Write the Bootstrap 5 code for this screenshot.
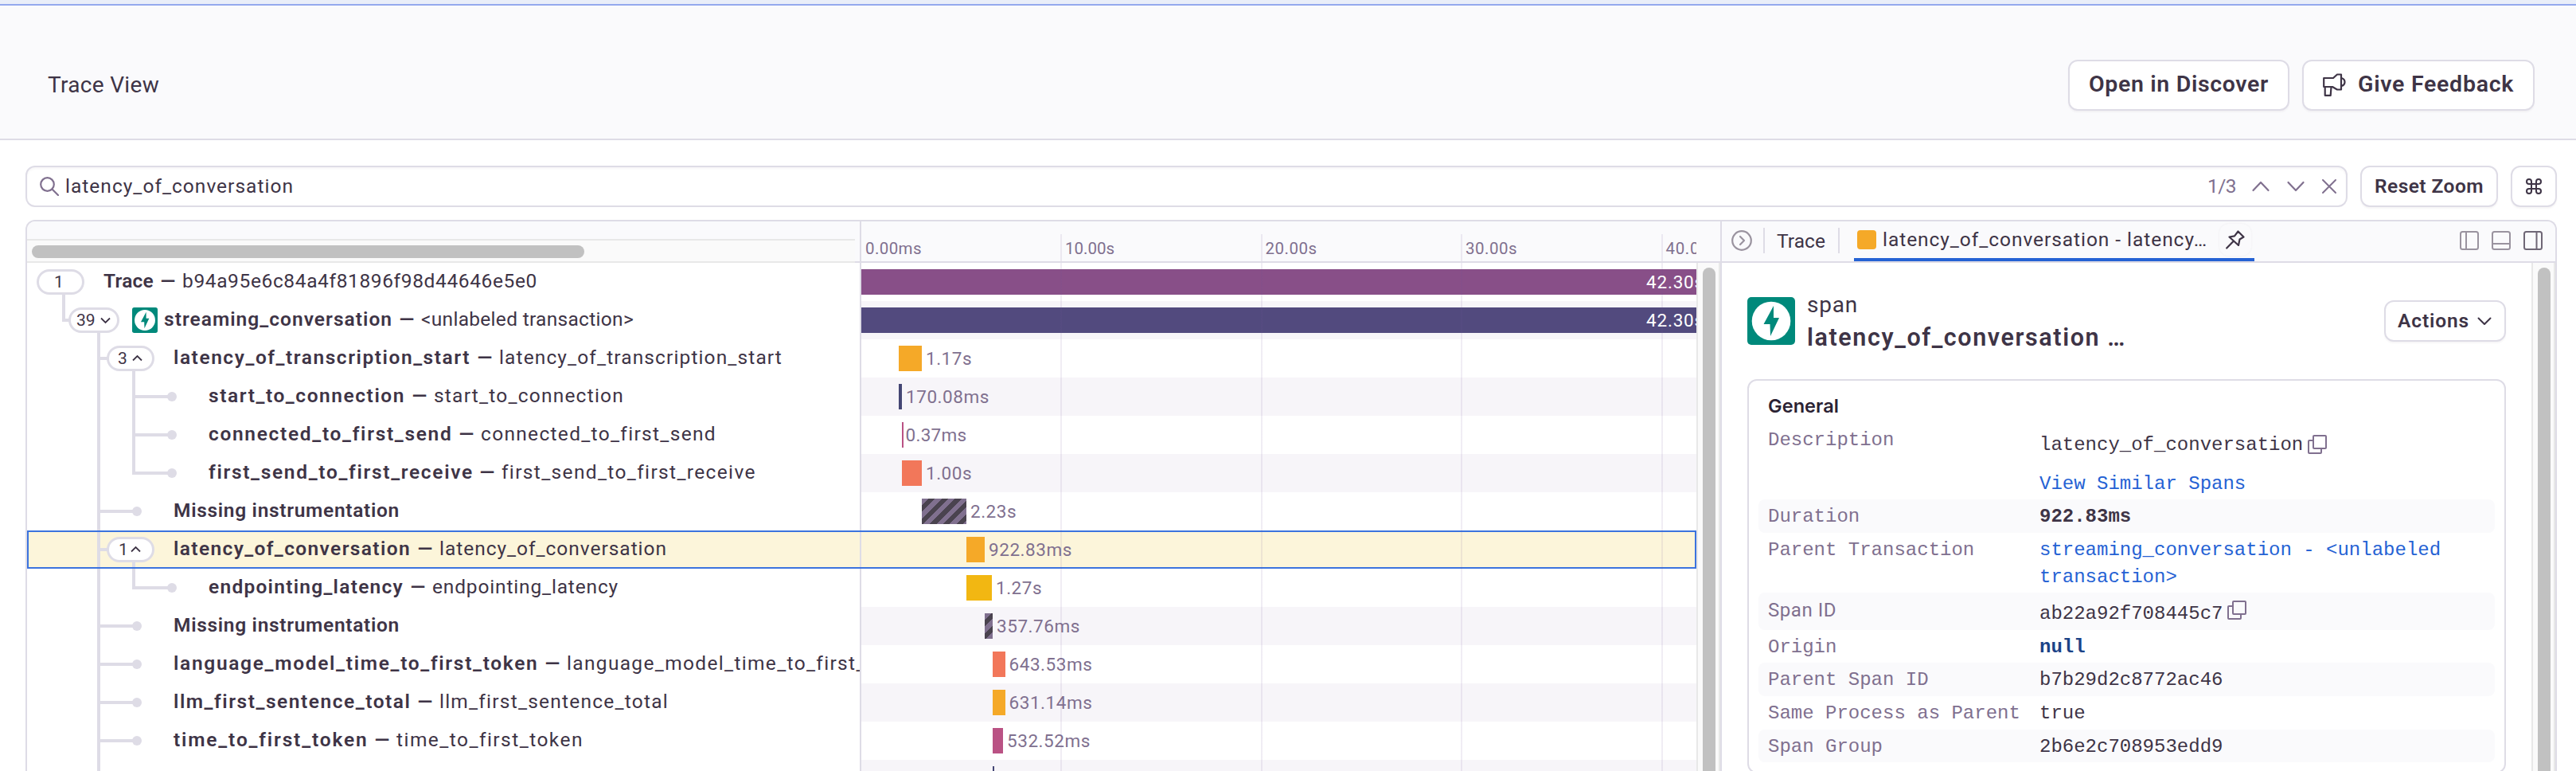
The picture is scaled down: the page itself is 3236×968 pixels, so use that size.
<!DOCTYPE html>
<html lang="en">
<head>
<meta charset="utf-8">
<title>Trace View</title>
<link href="https://cdn.jsdelivr.net/npm/bootstrap@5.3.0/dist/css/bootstrap.min.css" rel="stylesheet">
<style>
:root{--line:#dedce6;--ink:#3e3446;--sub:#80708f;--soft:#fafafc;--blue:#2562d4}
body{font-family:Roboto,"Liberation Sans",sans-serif;font-size:24.5px;line-height:1.2;color:var(--ink);height:968px;overflow:hidden;background:#fff}
svg{display:block;flex:none}
b{font-weight:600}
.bar-top{height:7px;background:#e9eef9;border-bottom:2px solid #94a9ee}
.page-head{height:169px;background:var(--soft);border-bottom:2px solid var(--line);padding:32px 52px 0 60px;font-size:28px}
.btn-line{background:#fff;border:2px solid var(--line);border-radius:12px;color:var(--ink);font-weight:600;padding:0;display:flex;align-items:center;box-shadow:0 2px 2px rgba(43,34,51,.04);line-height:1}
.btn-lg2{height:64px;font-size:28.5px;padding:0 24px}
.find{height:52px;border:2px solid var(--line);border-radius:12px;width:2917px;padding:0 12px 0 16px;box-shadow:inset 0 2px 3px rgba(43,34,51,.04)}
.find svg{color:var(--sub)}
.btn-sm2{height:52px;font-size:24.5px;justify-content:center}
.viewer{margin:16px 24px 0 32px;height:720px;border:2px solid var(--line);border-radius:12px 12px 0 0;border-bottom:0;overflow:hidden}
.main-col{width:2127px}
.strip{height:52px;border-bottom:2px solid var(--line);background:var(--soft)}
.tree-head{width:1046px;border-right:0}
.hscroll{width:1040px;margin-top:22px;height:30px;border-top:2px solid #e8e8e8;border-bottom:2px solid #e8e8e8;background:#fafafa;padding:6px 6px 0}
.thumb-h{width:694px;height:16px;border-radius:8px;background:#c1c1c1}
.axis{width:1051px;border-left:2px solid var(--line);padding-top:16px;overflow:hidden;font-size:20.5px;color:var(--sub)}
.tick{flex:none;width:251.5px;height:34px;border-left:2px solid rgba(110,80,150,.1);padding:6px 0 0 4px}
.tick:first-child{border-color:transparent;padding-left:3px;width:250px}
.body-rows{height:640px}
.rows{width:2097px;overflow:hidden;position:relative}
.trace-row{height:48px;display:flex;position:relative}
.tree-cell{width:1046px;flex:none;overflow:hidden;display:flex;align-items:center;white-space:nowrap}
.tree-cell b,.tree-cell span{position:relative;top:-1px}
.time-cell{flex:1 1 0;border-left:2px solid var(--line);display:flex;align-items:center;overflow:hidden;white-space:nowrap;font-size:22.5px;color:var(--sub)}
.trace-row:nth-child(even) .time-cell{background:#f7f5f9}
.trace-row.picked .tree-cell,.trace-row.picked .time-cell{background:#fcf5da}
.trace-row.picked::after{content:"";position:absolute;inset:0;border:2px solid #3b73de}
.span-bar{height:32px;flex:none;margin-right:5px}
.full{width:1060px;margin:0;color:#fff;padding:3px 0 0 986px}
.c-pur{background:#884f88}.c-ind{background:#524a7e}.c-org{background:#f5a928}.c-navy{background:#444674}.c-pink{background:#ba5284}.c-cor{background:#f2775a}.c-yel{background:#f2b712}
.c-gap{background:repeating-linear-gradient(135deg,#80708f 0 6px,#4a434f 6px 11.8px)}
.gridlines{position:absolute;inset:0 0 0 1297.5px;background:repeating-linear-gradient(90deg,rgba(110,80,150,.1) 0 2px,transparent 2px 251.5px);pointer-events:none}
.dash{width:36px;text-align:center;font-weight:600;flex:none}
.fit{display:inline-block;white-space:nowrap;flex:none}
.pill{fill:#fff;stroke:var(--line);stroke-width:3}
.num{font-size:21px;fill:var(--ink)}
.vscroll{width:30px;background:#fafafa;border:solid #e8e8e8;border-width:0 2px;padding:6px 0 0 6px}
.thumb-v{width:16px;height:700px;border-radius:8px;background:#c1c1c1}
.side{flex:1;border-left:2px solid var(--line);display:flex;flex-direction:column}
.sep{width:2px;height:32px;background:var(--line);margin-top:8px}
.tab-on{height:50px;border-bottom:4px solid var(--blue);width:503px;padding:0 4px;margin-left:18px}
.swatch{width:24px;height:24px;border-radius:4px}
.pinbox{width:40px;height:40px;border-radius:12px;box-shadow:0 0 3px rgba(43,34,51,.06);margin:0 0 0 15px}
.detail{width:953px;margin:43px 32px 0;height:60px}
.info{width:953px;margin:43px 32px 0;height:495px;border:2px solid var(--line);border-radius:12px;padding:14px 12px 0;background:#fff}
.info h6{font-family:Inter,Roboto,sans-serif;font-weight:600;font-size:23.5px;line-height:36px;margin:0 0 0 12px;color:#2b2233}
.kv{display:flex;padding:5px 12px 3px;border-radius:8px;font-family:"Liberation Mono",monospace;font-size:24px;line-height:34px;height:41.7px;white-space:nowrap}
.kv:nth-child(even){background:var(--soft)}
.kv dt{width:341px;flex:none;font-weight:400;color:var(--sub)}
.kv dd{margin:0}
.kv a{color:var(--blue);text-decoration:none}
</style>
</head>
<body>
<svg width="0" height="0" class="position-absolute">
  <defs>
    <symbol id="bolt" viewBox="0 0 60 60"><rect width="60" height="60" rx="5" fill="#00897b"/><circle cx="30" cy="30" r="24.3" fill="#fff"/><path d="M33 11 20.5 34h8L29 49 40 26h-7z" fill="#00897b"/></symbol>
    <symbol id="copy" viewBox="0 0 24 24"><g fill="none" stroke="#80708f" stroke-width="2" stroke-linejoin="round"><rect x="7" y="1" width="16" height="16" rx="1"/><path d="M7 7H2q-1 0-1 1v14q0 1 1 1h14q1 0 1-1v-5"/></g></symbol>
    <symbol id="leaf1" viewBox="0 0 184 48"><path d="M90 0v48M92 24h46" stroke="#dedce6" stroke-width="4"/><circle cx="138" cy="24" r="6" fill="#dedce6"/></symbol>
    <symbol id="leaf2" viewBox="0 0 228 48"><path d="M90 0v48M134 0v48M136 24h46" stroke="#dedce6" stroke-width="4"/><circle cx="182" cy="24" r="6" fill="#dedce6"/></symbol>
    <symbol id="leaf2end" viewBox="0 0 228 48"><path d="M90 0v48M134 0v24M132 24h50" fill="none" stroke="#dedce6" stroke-width="4"/><circle cx="182" cy="24" r="6" fill="#dedce6"/></symbol>
  </defs>
</svg>

<div class="bar-top"></div>
<header class="page-head d-flex align-items-center justify-content-between">
  <span class="fit" data-w="140">Trace View</span>
  <div class="d-flex" style="gap:16px">
    <button class="btn btn-line btn-lg2"><span class="fit" data-w="226">Open in Discover</span></button>
    <button class="btn btn-line btn-lg2"><svg width="29" height="29" viewBox="0 0 29 29" fill="none" stroke="currentColor" stroke-width="2.2" stroke-linejoin="round"><path d="M1.2 6H13l5-4.5h5v19h-5L12 17H1.2zM2.7 17v10.8h7L10.500 17M23.500 6q4 1.200 4 5t-4 5"/></svg><span class="fit" data-w="196" style="margin-left:15px">Give Feedback</span></button>
  </div>
</header>

<div class="d-flex" style="padding:32px 24px 0 32px;gap:16px">
  <div class="find d-flex align-items-center">
    <svg width="24" height="24" viewBox="0 0 24 24" fill="none" stroke="currentColor" stroke-width="2.2" stroke-linecap="round"><circle cx="9.500" cy="9.500" r="8.300"/><path d="M15.500 15.500 23 23"/></svg>
    <span class="fit" data-w="287" style="margin-left:8px">latency_of_conversation</span>
    <span class="fit ms-auto" data-w="36" style="color:var(--sub)">1/3</span>
    <svg style="margin-left:18px" width="26" height="24" viewBox="0 0 26 24" fill="none" stroke="currentColor" stroke-width="2.2" stroke-linecap="round" stroke-linejoin="round"><path d="m3.500 17 9.500-10 9.500 10"/></svg>
    <svg style="margin-left:18px" width="26" height="24" viewBox="0 0 26 24" fill="none" stroke="currentColor" stroke-width="2.200" stroke-linecap="round" stroke-linejoin="round"><path d="m3.500 7 9.500 10 9.500-10"/></svg>
    <svg style="margin-left:19px;margin-right:-1px" width="20" height="24" viewBox="0 0 20 24" fill="none" stroke="currentColor" stroke-width="2" stroke-linecap="round"><path d="m2 4 16 16M18 4 2 20"/></svg>
  </div>
  <button class="btn btn-line btn-sm2" style="width:173px"><span class="fit" data-w="137">Reset Zoom</span></button>
  <button class="btn btn-line btn-sm2" style="width:58px"><svg width="20" height="20" viewBox="0 0 20 20" fill="none" stroke="currentColor" stroke-width="2"><path d="M7 7V4a3 3 0 1 0-3 3h12a3 3 0 1 0-3-3v12a3 3 0 1 0 3-3H4a3 3 0 1 0 3 3z"/></svg></button>
</div>

<div class="viewer d-flex">
  <section class="main-col flex-shrink-0">
    <div class="strip d-flex">
      <div class="tree-head flex-shrink-0"><div class="hscroll"><div class="thumb-h"></div></div></div>
      <div class="axis d-flex">
        <div class="tick"><span class="fit" data-w="71">0.00ms</span></div>
        <div class="tick"><span class="fit" data-w="62">10.00s</span></div>
        <div class="tick"><span class="fit" data-w="65">20.00s</span></div>
        <div class="tick"><span class="fit" data-w="65">30.00s</span></div>
        <div class="tick"><span class="fit" data-w="66">40.00s</span></div>
      </div>
    </div>
    <div class="body-rows d-flex">
      <div class="rows">
        <div class="trace-row">
          <div class="tree-cell"><svg width="96" height="48" viewBox="0 0 96 48"><path d="M46 38v10" stroke="#dedce6" stroke-width="4"/><rect class="pill" x="13.500" y="9.500" width="57" height="29" rx="14.500"/><text class="num" x="34" y="31">1</text></svg><b class="fit" data-w="63">Trace</b><span class="dash">—</span><span class="fit" data-w="446">b94a95e6c84a4f81896f98d44646e5e0</span></div>
          <div class="time-cell"><div class="span-bar full c-pur"><span class="fit" data-w="73">42.30s</span></div></div>
        </div>
        <div class="trace-row">
          <div class="tree-cell"><svg width="132" height="48" viewBox="0 0 132 48"><path d="M46 0v24h8M90 38v10" fill="none" stroke="#dedce6" stroke-width="4"/><rect class="pill" x="53.500" y="9.500" width="61" height="29" rx="14.500"/><text class="num" x="62" y="31">39</text><path d="m93 21.500 5.500 5.500 5.500-5.500" fill="none" stroke="#3e3446" stroke-width="1.800"/></svg><svg width="32" height="32"><use href="#bolt"/></svg><b class="fit" data-w="287" style="margin-left:8px">streaming_conversation</b><span class="dash">—</span><span class="fit" data-w="267">&lt;unlabeled transaction&gt;</span></div>
          <div class="time-cell"><div class="span-bar full c-ind"><span class="fit" data-w="73">42.30s</span></div></div>
        </div>
        <div class="trace-row">
          <div class="tree-cell"><svg width="184" height="48" viewBox="0 0 184 48"><path d="M90 0v48M92 24h10M134 38v10" stroke="#dedce6" stroke-width="4"/><rect class="pill" x="101.500" y="9.500" width="57" height="29" rx="14.500"/><text class="num" x="114" y="31">3</text><path d="m133 26.500 5.500-5.500 5.500 5.500" fill="none" stroke="#3e3446" stroke-width="1.800"/></svg><b class="fit" data-w="373">latency_of_transcription_start</b><span class="dash">—</span><span class="fit" data-w="356">latency_of_transcription_start</span></div>
          <div class="time-cell"><div class="span-bar c-org" style="margin-left:47px;width:29px"></div><span class="fit" data-w="58">1.17s</span></div>
        </div>
        <div class="trace-row">
          <div class="tree-cell"><svg width="228" height="48"><use href="#leaf2"/></svg><b class="fit" data-w="247">start_to_connection</b><span class="dash">—</span><span class="fit" data-w="239">start_to_connection</span></div>
          <div class="time-cell"><div class="span-bar c-navy" style="margin-left:47px;width:4px"></div><span class="fit" data-w="105">170.08ms</span></div>
        </div>
        <div class="trace-row">
          <div class="tree-cell"><svg width="228" height="48"><use href="#leaf2"/></svg><b class="fit" data-w="306">connected_to_first_send</b><span class="dash">—</span><span class="fit" data-w="295">connected_to_first_send</span></div>
          <div class="time-cell"><div class="span-bar c-pink" style="margin-left:51px;width:1.5px;margin-right:3px"></div><span class="fit" data-w="77">0.37ms</span></div>
        </div>
        <div class="trace-row">
          <div class="tree-cell"><svg width="228" height="48"><use href="#leaf2end"/></svg><b class="fit" data-w="332">first_send_to_first_receive</b><span class="dash">—</span><span class="fit" data-w="318">first_send_to_first_receive</span></div>
          <div class="time-cell"><div class="span-bar c-cor" style="margin-left:51px;width:25px"></div><span class="fit" data-w="58">1.00s</span></div>
        </div>
        <div class="trace-row">
          <div class="tree-cell"><svg width="184" height="48"><use href="#leaf1"/></svg><b class="fit" data-w="284">Missing instrumentation</b></div>
          <div class="time-cell"><div class="span-bar c-gap" style="margin-left:76px;width:56px"></div><span class="fit" data-w="58">2.23s</span></div>
        </div>
        <div class="trace-row picked">
          <div class="tree-cell"><svg width="184" height="48" viewBox="0 0 184 48"><path d="M90 0v48M92 24h10M134 38v10" stroke="#dedce6" stroke-width="4"/><rect class="pill" x="101.500" y="9.500" width="57" height="29" rx="14.500"/><text class="num" x="115" y="31">1</text><path d="m131 26.500 5.500-5.500 5.500 5.500" fill="none" stroke="#3e3446" stroke-width="1.800"/></svg><b class="fit" data-w="298">latency_of_conversation</b><span class="dash">—</span><span class="fit" data-w="286">latency_of_conversation</span></div>
          <div class="time-cell"><div class="span-bar c-org" style="margin-left:132px;width:23px"></div><span class="fit" data-w="105">922.83ms</span></div>
        </div>
        <div class="trace-row">
          <div class="tree-cell"><svg width="228" height="48"><use href="#leaf2end"/></svg><b class="fit" data-w="245">endpointing_latency</b><span class="dash">—</span><span class="fit" data-w="234">endpointing_latency</span></div>
          <div class="time-cell" style="background:#fff"><div class="span-bar c-yel" style="margin-left:132px;width:32px"></div><span class="fit" data-w="58">1.27s</span></div>
        </div>
        <div class="trace-row">
          <div class="tree-cell"><svg width="184" height="48"><use href="#leaf1"/></svg><b class="fit" data-w="284">Missing instrumentation</b></div>
          <div class="time-cell"><div class="span-bar c-gap" style="margin-left:155px;width:10px"></div><span class="fit" data-w="105">357.76ms</span></div>
        </div>
        <div class="trace-row">
          <div class="tree-cell"><svg width="184" height="48"><use href="#leaf1"/></svg><b class="fit" data-w="458">language_model_time_to_first_token</b><span class="dash">—</span><span class="fit" data-w="442">language_model_time_to_first_token</span></div>
          <div class="time-cell"><div class="span-bar c-cor" style="margin-left:165px;width:15.5px"></div><span class="fit" data-w="105">643.53ms</span></div>
        </div>
        <div class="trace-row">
          <div class="tree-cell"><svg width="184" height="48"><use href="#leaf1"/></svg><b class="fit" data-w="298">llm_first_sentence_total</b><span class="dash">—</span><span class="fit" data-w="287">llm_first_sentence_total</span></div>
          <div class="time-cell"><div class="span-bar c-org" style="margin-left:165px;width:15.5px"></div><span class="fit" data-w="105">631.14ms</span></div>
        </div>
        <div class="trace-row">
          <div class="tree-cell"><svg width="184" height="48"><use href="#leaf1"/></svg><b class="fit" data-w="244">time_to_first_token</b><span class="dash">—</span><span class="fit" data-w="234">time_to_first_token</span></div>
          <div class="time-cell"><div class="span-bar c-pink" style="margin-left:165px;width:13px"></div><span class="fit" data-w="105">532.52ms</span></div>
        </div>
        <div class="trace-row">
          <div class="tree-cell"><svg width="184" height="48" viewBox="0 0 184 48"><path d="M90 0v48" stroke="#dedce6" stroke-width="4"/></svg></div>
          <div class="time-cell"><div class="span-bar c-navy" style="margin-left:165px;width:2px"></div></div>
        </div>
        <div class="gridlines"></div>
      </div>
      <div class="vscroll"><div class="thumb-v"></div></div>
    </div>
  </section>

  <aside class="side">
    <div class="strip d-flex flex-shrink-0">
      <svg style="margin:11px 14px 0 12px" width="26" height="26" viewBox="0 0 26 26" fill="none" stroke="#9a939f" stroke-width="2.200" stroke-linecap="round" stroke-linejoin="round"><circle cx="13" cy="13" r="11.800"/><path d="m11 8 5 5-5 5"/></svg>
      <i class="sep"></i>
      <span class="fit" data-w="61" style="margin:10px 16px 0 15px">Trace</span>
      <i class="sep"></i>
      <div class="tab-on d-flex align-items-center">
        <i class="swatch c-org"></i><span class="fit" data-w="408" style="margin-left:8px">latency_of_conversation - latency…</span>
        <span class="pinbox d-flex align-items-center justify-content-center"><svg width="24" height="24" viewBox="0 0 24 24" fill="none" stroke="#3e3446" stroke-width="2.200" stroke-linecap="round" stroke-linejoin="round"><path d="m15.500 1.500 7 7-5 3-1.500 7.500L4.500 8.500l6.500-1.200zM9.500 14 1.200 22.500"/></svg></span>
      </div>
      <div class="ms-auto d-flex" style="gap:16px;padding:12px 16px 0 0">
        <svg width="24" height="24" viewBox="0 0 24 24" fill="none" stroke="#9a939f" stroke-width="2"><rect x="1" y="1" width="22" height="22" rx="2.500"/><path d="M8 1v22"/></svg>
        <svg width="24" height="24" viewBox="0 0 24 24" fill="none" stroke="#9a939f" stroke-width="2"><rect x="1" y="1" width="22" height="22" rx="2.500"/><path d="M1 16h22"/></svg>
        <svg width="24" height="24" viewBox="0 0 24 24" fill="none" stroke="#6f6776" stroke-width="2"><rect x="1" y="1" width="22" height="22" rx="2.500"/><path d="M16.500 1v22"/></svg>
      </div>
    </div>
    <div class="d-flex flex-grow-1">
      <div class="flex-grow-1">
        <div class="detail d-flex">
          <svg width="60" height="60"><use href="#bolt"/></svg>
          <div style="margin:-11px 0 0 15px;line-height:41px">
            <div style="font-size:28px"><span class="fit" data-w="64">span</span></div>
            <div style="font-size:30.5px"><b class="fit" data-w="401">latency_of_conversation …</b></div>
          </div>
          <button class="btn btn-line btn-sm2 ms-auto mt-1" style="width:153px"><span class="fit" data-w="90">Actions</span><svg style="margin-left:9px" width="20" height="20" viewBox="0 0 20 20" fill="none" stroke="currentColor" stroke-width="2" stroke-linecap="round" stroke-linejoin="round"><path d="m2.500 6.500 7.500 7.500 7.500-7.500"/></svg></button>
        </div>
        <div class="info">
          <h6><span class="fit" data-w="89">General</span></h6>
          <dl class="m-0">
            <div class="kv" style="height:99px;padding-top:8px"><dt>Description</dt><dd><div class="d-flex align-items-center" style="padding-top:6px"><span>latency_of_conversation</span><svg style="margin:-3px 0 0 6px" width="24" height="24"><use href="#copy"/></svg></div><div style="padding-top:15px"><a href="#">View Similar Spans</a></div></dd></div>
            <div class="kv"><dt>Duration</dt><dd><b>922.83ms</b></dd></div>
            <div class="kv" style="height:75px"><dt>Parent Transaction</dt><dd><a href="#">streaming_conversation - &lt;unlabeled<br>transaction&gt;</a></dd></div>
            <div class="kv" style="height:47px"><dt style="font-family:Roboto,sans-serif"><span class="fit" data-w="86">Span ID</span></dt><dd class="d-flex" style="padding-top:5px"><span>ab22a92f708445c7</span><svg style="margin:0 0 0 6px" width="24" height="24"><use href="#copy"/></svg></dd></div>
            <div class="kv"><dt>Origin</dt><dd><b style="color:#1b4387">null</b></dd></div>
            <div class="kv"><dt>Parent Span ID</dt><dd>b7b29d2c8772ac46</dd></div>
            <div class="kv"><dt>Same Process as Parent</dt><dd>true</dd></div>
            <div class="kv"><dt>Span Group</dt><dd>2b6e2c708953edd9</dd></div>
          </dl>
        </div>
      </div>
      <div class="vscroll"><div class="thumb-v"></div></div>
    </div>
  </aside>
</div>

<script src="https://cdn.jsdelivr.net/npm/bootstrap@5.3.0/dist/js/bootstrap.bundle.min.js"></script>
<script>
// Track each label so that it fills the column width given in data-w
document.querySelectorAll('.fit').forEach(function (el) {
  var w = +el.dataset.w, n = el.textContent.length;
  var natural = el.getBoundingClientRect().width;
  el.style.letterSpacing = ((w - natural) / n).toFixed(3) + 'px';
  el.style.width = w + 'px';
});
</script>
</body>
</html>
